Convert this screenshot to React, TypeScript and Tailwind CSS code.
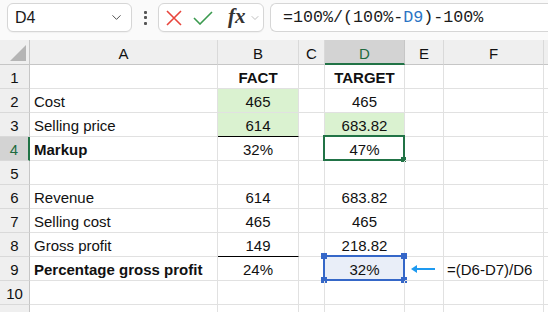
import { ChevronDown } from "lucide-react";

type Cell = {
  text?: string;
  bold?: boolean;
  align?: "left" | "center";
  fill?: boolean;
  underline?: boolean;
};

const COLS = ["A", "B", "C", "D", "E", "F", ""];

const ROWS: Record<number, Partial<Record<string, Cell>>> = {
  1: { B: { text: "FACT", bold: true, align: "center" }, D: { text: "TARGET", bold: true, align: "center" } },
  2: { A: { text: "Cost" }, B: { text: "465", align: "center", fill: true }, D: { text: "465", align: "center" } },
  3: {
    A: { text: "Selling price" },
    B: { text: "614", align: "center", fill: true, underline: true },
    D: { text: "683.82", align: "center", fill: true },
  },
  4: { A: { text: "Markup", bold: true }, B: { text: "32%", align: "center" }, D: { text: "47%", align: "center" } },
  5: {},
  6: { A: { text: "Revenue" }, B: { text: "614", align: "center" }, D: { text: "683.82", align: "center" } },
  7: { A: { text: "Selling cost" }, B: { text: "465", align: "center" }, D: { text: "465", align: "center" } },
  8: { A: { text: "Gross profit" }, B: { text: "149", align: "center", underline: true }, D: { text: "218.82", align: "center" } },
  9: { A: { text: "Percentage gross profit", bold: true }, B: { text: "24%", align: "center" }, D: { text: "32%", align: "center" } },
  10: {},
  11: {},
};

function Toolbar() {
  return (
    <div className="h-[40px] bg-[#fafafa] flex items-start pt-[3px] pl-[7px] gap-0">
      <div className="w-[125px] h-[29px] rounded-[6px] border border-[#d6d6d6] bg-white flex items-center pl-[7px] pr-[7px] shadow-[0_1px_1px_rgba(0,0,0,0.04)]">
        <span className="text-[16px] text-[#1a1a1a] leading-none pt-[1px]">D4</span>
        <ChevronDown className="ml-auto w-[15px] h-[15px] text-[#444]" strokeWidth={1.5} />
      </div>
      <div className="w-[26px] h-[29px] flex flex-col items-center justify-center gap-[2.5px]">
        <span className="w-[3px] h-[3px] bg-[#555] rounded-[1px]" />
        <span className="w-[3px] h-[3px] bg-[#555] rounded-[1px]" />
        <span className="w-[3px] h-[3px] bg-[#555] rounded-[1px]" />
      </div>
      <div className="w-[106px] h-[29px] rounded-[6px] border border-[#d6d6d6] bg-white flex items-center pl-[7px] shadow-[0_1px_1px_rgba(0,0,0,0.04)]">
        <svg width="16" height="16" viewBox="0 0 16 16" className="shrink-0">
          <path d="M1 1 L15 15 M15 1 L1 15" stroke="#e8453c" strokeWidth="1.6" fill="none" />
        </svg>
        <svg width="20" height="14" viewBox="0 0 20 14" className="ml-[11px] shrink-0">
          <path d="M1 7 L7 13 L19 1" stroke="#3b9a4f" strokeWidth="1.6" fill="none" />
        </svg>
        <span className="ml-[15px] text-[21px] italic font-bold leading-none text-[#333] pb-[2px]" style={{ fontFamily: '"Liberation Serif", serif' }}>
          fx
        </span>
        <ChevronDown className="ml-[3px] w-[12px] h-[12px] text-[#aaa]" strokeWidth={1.5} />
      </div>
      <div className="ml-[6px] flex-1 h-[29px] rounded-l-[6px] border border-r-0 border-[#d6d6d6] bg-white flex items-center pl-[12px]">
        <span className="text-[16.7px] text-[#1a1a1a] leading-none pt-[1px]" style={{ fontFamily: '"Liberation Mono", monospace' }}>
          =100%/(100%-<span className="text-[#2a74c5]">D9</span>)-100%
        </span>
      </div>
    </div>
  );
}

export default function App() {
  return (
    <div
      className="w-[548px] h-[312px] overflow-hidden bg-white text-[#111]"
      style={{ fontFamily: '"Liberation Sans", Arial, sans-serif' }}
    >
      <Toolbar />
      <div className="grid grid-cols-[30px_188px_81px_26px_80px_39px_100px_1fr] text-[15px]">
        {/* column headers */}
        <div className="h-[25px] bg-[#efefef] border-r border-b border-[#c6c6c6] flex items-end justify-end pr-[3px] pb-[3px]">
          <div className="w-0 h-0 border-l-[16px] border-l-transparent border-b-[16px] border-b-[#b5b5b5]" />
        </div>
        {COLS.map((c, i) => (
          <div
            key={i}
            className={
              "h-[25px] flex justify-center pt-[4px] leading-[20px] border-r " +
              (c === "D"
                ? "bg-[#d3d3d3] text-[#1e6b3f] border-r-[#c6c6c6] border-b-2 border-b-[#217346]"
                : "bg-[#efefef] border-r-[#d9d9d9] border-b border-b-[#c6c6c6]")
            }
          >
            {c}
          </div>
        ))}
        {/* rows */}
        {Object.keys(ROWS).map((k) => {
          const r = Number(k);
          const row = ROWS[r];
          return [
            <div
              key={"h" + r}
              className={
                "h-[24px] flex justify-center pt-[3px] leading-[20px] border-b border-b-[#d9d9d9] " +
                (r === 4
                  ? "bg-[#d3d3d3] text-[#1e6b3f] border-r-2 border-r-[#217346]"
                  : "bg-[#efefef] border-r border-r-[#c6c6c6]")
              }
            >
              {r}
            </div>,
            ...COLS.map((c) => {
              const cell = row[c];
              const isD4 = r === 4 && c === "D";
              const isD9 = r === 9 && c === "D";
              return (
                <div
                  key={r + c}
                  className={
                    "relative h-[24px] border-r border-r-[#e1e1e1] pt-[3px] leading-[20px] whitespace-nowrap " +
                    (cell?.underline ? "border-b border-b-black " : "border-b border-b-[#e1e1e1] ") +
                    (cell?.fill ? "bg-[#daf2d0] " : isD9 ? "bg-[#e9eef8] " : "") +
                    (cell?.bold ? "font-bold " : "") +
                    (cell?.align === "center" ? "text-center " : "pl-[4px] ")
                  }
                >
                  {cell?.text}
                  {isD4 && (
                    <div className="absolute -left-[2px] -top-[2px] -right-[1px] -bottom-[1px] border-2 border-[#217346]">
                      <div className="absolute -right-[3px] -bottom-[3px] w-[5px] h-[5px] bg-[#217346]" />
                    </div>
                  )}
                  {isD9 && (
                    <div className="absolute -left-[2px] -top-[2px] -right-[1px] -bottom-[1px] border-2 border-[#3567c8]">
                      <div className="absolute -left-[4px] -top-[4px] w-[6px] h-[6px] bg-[#3567c8]" />
                      <div className="absolute -right-[4px] -top-[4px] w-[6px] h-[6px] bg-[#3567c8]" />
                      <div className="absolute -left-[4px] -bottom-[4px] w-[6px] h-[6px] bg-[#3567c8]" />
                      <div className="absolute -right-[4px] -bottom-[4px] w-[6px] h-[6px] bg-[#3567c8]" />
                    </div>
                  )}
                  {r === 9 && c === "E" && (
                    <svg width="24" height="8" viewBox="0 0 24 8" className="absolute left-[6px] top-[8px]">
                      <path d="M0 4 L6 0 L6 3 L24 3 L24 5 L6 5 L6 8 Z" fill="#1e9af0" />
                    </svg>
                  )}
                  {r === 9 && c === "F" && <span className="-ml-[1px]">=(D6-D7)/D6</span>}
                </div>
              );
            }),
          ];
        })}
      </div>
    </div>
  );
}
